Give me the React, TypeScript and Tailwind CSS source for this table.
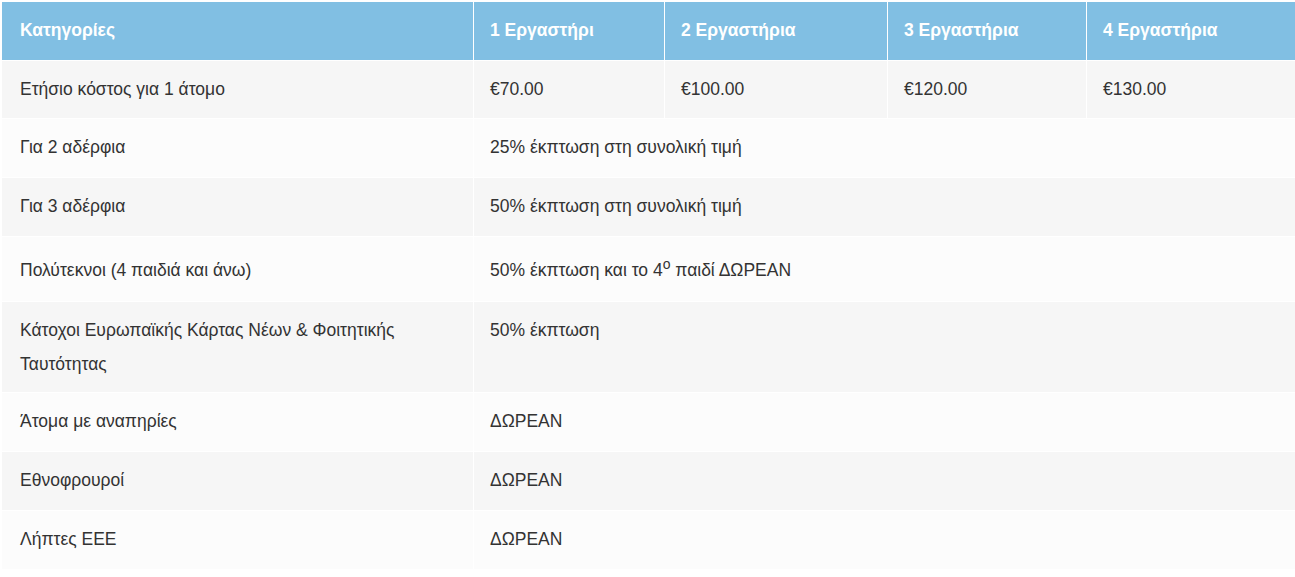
const HEADERS = ["Κατηγορίες", "1 Εργαστήρι", "2 Εργαστήρια", "3 Εργαστήρια", "4 Εργαστήρια"];

const PRICES = ["€70.00", "€100.00", "€120.00", "€130.00"];

type Row = { label: React.ReactNode; value: React.ReactNode; h: string; pt?: string };

const ROWS: Row[] = [
  { label: "Για 2 αδέρφια", value: "25% έκπτωση στη συνολική τιμή", h: "h-[59px]" },
  { label: "Για 3 αδέρφια", value: "50% έκπτωση στη συνολική τιμή", h: "h-[59px]" },
  {
    label: "Πολύτεκνοι (4 παιδιά και άνω)",
    value: (
      <>
        50% έκπτωση και το 4<sup className="text-[14px]">ο</sup> παιδί ΔΩΡΕΑΝ
      </>
    ),
    h: "h-[65px]",
    pt: "pt-[16px]",
  },
  { label: "Κάτοχοι Ευρωπαϊκής Κάρτας Νέων & Φοιτητικής Ταυτότητας", value: "50% έκπτωση", h: "h-[91px]" },
  { label: "Άτομα με αναπηρίες", value: "ΔΩΡΕΑΝ", h: "h-[59px]" },
  { label: "Εθνοφρουροί", value: "ΔΩΡΕΑΝ", h: "h-[59px]" },
  { label: "Λήπτες ΕΕΕ", value: "ΔΩΡΕΑΝ", h: "h-[59px]" },
];

export default function App() {
  return (
    <div className="w-full overflow-hidden bg-white pt-px pl-px" style={{ fontFamily: '"Liberation Sans", Arial, sans-serif' }}>
      <table className="w-[1300px] table-fixed border-collapse text-[17.5px] leading-[34px] text-[#333]">
        <colgroup>
          <col className="w-[472px]" />
          <col className="w-[191px]" />
          <col className="w-[223px]" />
          <col className="w-[199px]" />
          <col />
        </colgroup>
        <thead>
          <tr className="h-[59px] bg-[#81bfe3]">
            {HEADERS.map((h, i) => (
              <th
                key={h}
                className={`border border-white ${i === 0 ? "pl-[18px]" : "pl-4"} pt-[11px] text-left align-top font-bold text-white`}
              >
                {h}
              </th>
            ))}
          </tr>
        </thead>
        <tbody>
          <tr className="h-[58px] bg-[#f6f6f6]">
            <td className="border border-white pl-[18px] pt-[11px] align-top">Ετήσιο κόστος για 1 άτομο</td>
            {PRICES.map((p) => (
              <td key={p} className="border border-white pl-4 pt-[11px] align-top">
                {p}
              </td>
            ))}
          </tr>
          {ROWS.map((r, i) => (
            <tr key={i} className={`${r.h} ${i % 2 === 0 ? "bg-[#fcfcfc]" : "bg-[#f6f6f6]"}`}>
              <td className={`border border-white pl-[18px] pr-4 ${r.pt ?? "pt-[11px]"} align-top`}>{r.label}</td>
              <td colSpan={4} className={`border border-white pl-4 ${r.pt ?? "pt-[11px]"} align-top`}>
                {r.value}
              </td>
            </tr>
          ))}
        </tbody>
      </table>
    </div>
  );
}
